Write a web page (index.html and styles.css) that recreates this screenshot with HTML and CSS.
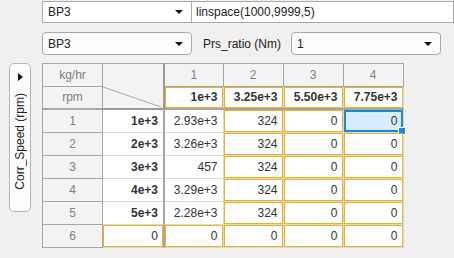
FILE: index.html
```html
<!DOCTYPE html>
<html lang="en">
<head>
    <meta charset="UTF-8">
    <title>Map Editor</title>
    <link rel="stylesheet" href="styles.css">
</head>
<body>

<div class="top-row">
    <div class="select square">
        <span>BP3</span>
        <span class="arrow"></span>
    </div>
    <div class="field">linspace(1000,9999,5)</div>
</div>

<div class="second-row">
    <div class="select rounded">
        <span>BP3</span>
        <span class="arrow"></span>
    </div>
    <label class="label">Prs_ratio (Nm)</label>
    <div class="select rounded">
        <span>1</span>
        <span class="arrow"></span>
    </div>
</div>

<div class="main">
    <div class="toggle">
        <span class="play"></span>
        <span class="toggle-text">Corr_Speed (rpm)</span>
    </div>

    <table class="grid">
        <colgroup>
            <col class="c0"><col class="c1"><col class="c2"><col class="c3"><col class="c4"><col class="c5">
        </colgroup>
        <tr class="h1">
            <td class="head"><div class="cell">kg/hr</div></td>
            <td class="corner" rowspan="2">
                <svg width="60" height="44" viewBox="0 0 60 44">
                    <line x1="0" y1="23" x2="58" y2="43" stroke="#a8a8a8" stroke-width="1"/>
                </svg>
            </td>
            <td class="head"><div class="cell">1</div></td>
            <td class="head"><div class="cell">2</div></td>
            <td class="head"><div class="cell">3</div></td>
            <td class="head"><div class="cell">4</div></td>
        </tr>
        <tr class="h2">
            <td class="head"><div class="cell">rpm</div></td>
            <td><div class="cell edit bold">1e+3</div></td>
            <td><div class="cell edit bold">3.25e+3</div></td>
            <td><div class="cell edit bold">5.50e+3</div></td>
            <td><div class="cell edit bold">7.75e+3</div></td>
        </tr>
        <tr>
            <td class="head"><div class="cell">1</div></td>
            <td class="bp"><div class="cell bold">1e+3</div></td>
            <td><div class="cell">2.93e+3</div></td>
            <td><div class="cell edit">324</div></td>
            <td><div class="cell edit">0</div></td>
            <td><div class="cell selected">0<span class="handle"></span></div></td>
        </tr>
        <tr>
            <td class="head"><div class="cell">2</div></td>
            <td class="bp"><div class="cell bold">2e+3</div></td>
            <td><div class="cell">3.26e+3</div></td>
            <td><div class="cell edit">324</div></td>
            <td><div class="cell edit">0</div></td>
            <td><div class="cell edit">0</div></td>
        </tr>
        <tr>
            <td class="head"><div class="cell">3</div></td>
            <td class="bp"><div class="cell bold">3e+3</div></td>
            <td><div class="cell">457</div></td>
            <td><div class="cell edit">324</div></td>
            <td><div class="cell edit">0</div></td>
            <td><div class="cell edit">0</div></td>
        </tr>
        <tr>
            <td class="head"><div class="cell">4</div></td>
            <td class="bp"><div class="cell bold">4e+3</div></td>
            <td><div class="cell">3.29e+3</div></td>
            <td><div class="cell edit">324</div></td>
            <td><div class="cell edit">0</div></td>
            <td><div class="cell edit">0</div></td>
        </tr>
        <tr>
            <td class="head"><div class="cell">5</div></td>
            <td class="bp"><div class="cell bold">5e+3</div></td>
            <td><div class="cell">2.28e+3</div></td>
            <td><div class="cell edit">324</div></td>
            <td><div class="cell edit">0</div></td>
            <td><div class="cell edit">0</div></td>
        </tr>
        <tr>
            <td class="head"><div class="cell">6</div></td>
            <td class="bp"><div class="cell edit">0</div></td>
            <td><div class="cell edit">0</div></td>
            <td><div class="cell edit">0</div></td>
            <td><div class="cell edit">0</div></td>
            <td><div class="cell edit">0</div></td>
        </tr>
    </table>
</div>

</body>
</html>
```

FILE: styles.css
```css
body {
    margin: 0;
    background-color: #f0f0f0;
    font-family: "Liberation Sans", Arial, sans-serif;
    font-size: 12px;
    color: #222;
    overflow: hidden;
}

.top-row {
    display: flex;
    margin-top: 1px;
    padding-left: 42px;
    height: 22px;
}

.second-row {
    display: flex;
    align-items: center;
    margin-top: 9px;
    padding-left: 42px;
    height: 23px;
}

.select {
    box-sizing: border-box;
    width: 150px;
    height: 100%;
    display: flex;
    align-items: center;
    justify-content: space-between;
    padding: 0 8px 0 5px;
    border: 1px solid #a9a9a9;
    background-color: #fff;
}

.select.rounded {
    border-radius: 4px;
    background-color: #fbfbfb;
}

.arrow {
    width: 0;
    height: 0;
    border-left: 4px solid transparent;
    border-right: 4px solid transparent;
    border-top: 4px solid #111;
}

.field {
    flex: 1;
    box-sizing: border-box;
    height: 100%;
    display: flex;
    align-items: center;
    padding-left: 4px;
    border: 1px solid #a9a9a9;
    border-left: none;
    background-color: #fff;
}

.label {
    margin: 0 10px 0 11px;
    width: 78px;
}

.main {
    display: flex;
    align-items: flex-start;
    gap: 11px;
    margin-top: 8px;
    padding-left: 9px;
}

.toggle {
    box-sizing: border-box;
    width: 22px;
    height: 149px;
    display: flex;
    flex-direction: column;
    align-items: center;
    border: 1px solid #b5b5b5;
    border-radius: 5px;
    background-color: #fbfbfb;
}

.play {
    margin-top: 9px;
    width: 0;
    height: 0;
    border-top: 4px solid transparent;
    border-bottom: 4px solid transparent;
    border-left: 5px solid #111;
}

.toggle-text {
    margin-top: 12px;
    writing-mode: vertical-rl;
    transform: rotate(180deg);
    white-space: nowrap;
    line-height: 20px;
}

.grid {
    border-collapse: collapse;
    table-layout: fixed;
    background-color: #fff;
    border: 1px solid #bdbdbd;
}

.c0 { width: 60px; }
.c1 { width: 60px; }
.c2 { width: 59px; }
.c3 { width: 60px; }
.c4 { width: 60px; }
.c5 { width: 60px; }

.grid td {
    padding: 0;
    border: 1px solid #d9d9d9;
    color: #333;
}

.cell {
    position: relative;
    box-sizing: border-box;
    height: 22px;
    line-height: 20px;
    padding: 0 4px;
    border: 1px solid transparent;
    text-align: right;
}

.grid .h2 .cell {
    height: 21px;
    line-height: 19px;
}

.grid td.head {
    background-color: #f3f3f3;
    border-color: #a6a6a6;
    color: #808080;
}

.grid td.head .cell {
    text-align: center;
}

.grid .h2 td {
    border-bottom: 2px solid #a6a6a6;
}

.grid td.corner {
    background-color: #f3f3f3;
    border: 1px solid #a6a6a6;
    border-right: 2px solid #9a9a9a;
    border-bottom: 2px solid #9a9a9a;
    vertical-align: top;
}

.corner svg {
    display: block;
}

.grid td.bp {
    border-right: 2px solid #a6a6a6;
}

.cell.edit {
    border-color: #efb21f;
}

.cell.selected {
    background-color: #d9ecfb;
    border: 2px solid #1589e6;
    line-height: 18px;
    padding-right: 3px;
}

.handle {
    position: absolute;
    right: -5px;
    bottom: -5px;
    width: 6px;
    height: 6px;
    background-color: #1589e6;
    border: 1px solid #fff;
}

.bold {
    font-weight: bold;
}
```
